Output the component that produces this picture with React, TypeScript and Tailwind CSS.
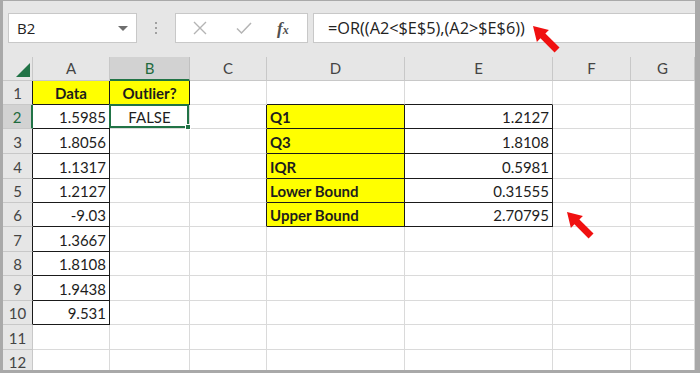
import React from 'react'

const COLS = ['A', 'B', 'C', 'D', 'E', 'F', 'G']

const dataA = ['Data', '1.5985', '1.8056', '1.1317', '1.2127', '-9.03', '1.3667', '1.8108', '1.9438', '9.531']
const labelsD = ['Q1', 'Q3', 'IQR', 'Lower Bound', 'Upper Bound']
const valuesE = ['1.2127', '1.8108', '0.5981', '0.31555', '2.70795']

function Arrow() {
  return (
    <svg width="32" height="32" viewBox="0 0 32 32">
      <g transform="translate(2,2) rotate(225) translate(-34,0)">
        <polygon points="0,-3.5 20,-3.5 20,-8.5 34,0 20,8.5 20,3.5 0,3.5" fill="#f01010" />
      </g>
    </svg>
  )
}

function Cell({ row, col }: { row: number; col: number }) {
  // col 0..6 = A..G, row 1..12
  const isA = col === 0 && row <= 10
  const isB1 = col === 1 && row === 1
  const isD = col === 3 && row >= 2 && row <= 6
  const isE = col === 4 && row >= 2 && row <= 6
  const boxed = isA || isB1 || isD || isE
  const leftOfBox = col === 2 && row >= 2 && row <= 6
  const aboveBox = (col === 3 || col === 4) && row === 1

  let cls = 'relative flex items-end pb-[1px] text-[15px] leading-[20px] text-[#1d1d1d] border-r border-b '
  cls += boxed ? 'border-[#1a1a1a] ' : leftOfBox ? 'border-r-[#1a1a1a] border-b-[#dadada] ' : aboveBox ? 'border-r-[#dadada] border-b-[#1a1a1a] ' : 'border-[#dadada] '

  let text = ''
  if (isA) {
    text = dataA[row - 1]
    cls += row === 1 ? 'bg-[#ffff00] justify-center font-bold ' : 'justify-end pr-[3px] '
  } else if (isB1) {
    text = 'Outlier?'
    cls += 'bg-[#ffff00] justify-center font-bold '
  } else if (isD) {
    text = labelsD[row - 2]
    cls += 'bg-[#ffff00] font-bold pl-[3px] '
  } else if (isE) {
    text = valuesE[row - 2]
    cls += 'justify-end pr-[3px] '
  } else if (col === 1 && row === 2) {
    text = 'FALSE'
    cls += 'justify-center '
  }

  return (
    <div className={cls}>
      {text}
      {col === 1 && row === 2 && (
        <div className="absolute -left-[1px] -top-[1px] right-0 bottom-0 border-2 border-[#217346] z-10">
          <div className="absolute -right-[4px] -bottom-[4px] w-[6px] h-[6px] bg-[#217346] border border-white" />
        </div>
      )}
    </div>
  )
}

export default function App() {
  const rows = Array.from({ length: 12 }, (_, i) => i + 1)

  return (
    <div className="relative w-[700px] h-[373px] overflow-hidden bg-white border-t border-l-[3px] border-r-[5px] border-b-[3px] border-[#a9a9a9] font-['Lato',sans-serif]">
      {/* Formula bar */}
      <div className="h-[56px] bg-[#e6e6e6] flex items-start pt-[12px] pl-[5px]">
        <div className="w-[129px] h-[30px] bg-white border border-[#c8c8c8] flex items-center justify-between pl-[8px] pr-[8px]">
          <span className="font-['Open_Sans',sans-serif] text-[15px] text-[#222]">B2</span>
          <span className="w-0 h-0 border-l-[5px] border-r-[5px] border-t-[5px] border-l-transparent border-r-transparent border-t-[#6e6e6e]" />
        </div>
        <div className="w-[38px] h-[30px] flex flex-col items-center justify-center gap-[3px]">
          <span className="w-[2px] h-[2px] bg-[#a0a0a0]" />
          <span className="w-[2px] h-[2px] bg-[#a0a0a0]" />
          <span className="w-[2px] h-[2px] bg-[#a0a0a0]" />
        </div>
        <div className="w-[133px] h-[30px] bg-white border border-[#c8c8c8] flex items-center">
          <svg width="14" height="14" viewBox="0 0 14 14" className="ml-[17px]">
            <path d="M1 1 L13 13 M13 1 L1 13" stroke="#b4b4b4" strokeWidth="1.4" />
          </svg>
          <svg width="16" height="14" viewBox="0 0 16 14" className="ml-[29px]">
            <path d="M1 7.5 L5.5 12 L15 2" stroke="#b4b4b4" strokeWidth="1.5" fill="none" />
          </svg>
          <span className="ml-[25px] font-['Liberation_Serif',serif] italic font-bold text-[17px] text-[#505050] leading-none">
            f<span className="text-[12px]">x</span>
          </span>
        </div>
        <div className="ml-[5px] flex-1 h-[30px] bg-white border border-[#c8c8c8] border-r-0 flex items-center pl-[14px]">
          <span className="font-['Open_Sans',sans-serif] text-[16.3px] text-[#222]">=OR((A2&lt;$E$5),(A2&gt;$E$6))</span>
        </div>
      </div>

      {/* Sheet grid */}
      <div className="grid grid-cols-[30px_77px_80px_77px_138px_148px_78px_1fr] grid-rows-[24px_24px_24px_25px_25px_24px_24px_25px_24px_25px_24px_25px_24px]">
        <div className="bg-[#e6e6e6] border-r border-b border-[#c8c8c8] flex items-end justify-end pr-[2px] pb-[3px]">
          <span className="w-0 h-0 border-b-[14px] border-l-[14px] border-b-[#217346] border-l-transparent" />
        </div>
        {COLS.map((c, i) => (
          <div
            key={c}
            className={
              i === 1
                ? 'bg-[#d2d2d2] border-r border-[#c0c0c0] border-b-2 border-b-[#217346] flex items-center justify-center text-[15px] text-[#1f6b3e]'
                : 'bg-[#e6e6e6] border-r border-b border-[#c8c8c8] flex items-center justify-center text-[15px] text-[#444]'
            }
          >
            {c}
          </div>
        ))}
        {rows.map((r) => (
          <React.Fragment key={r}>
            <div
              className={
                r === 2
                  ? 'bg-[#d2d2d2] border-b border-[#c8c8c8] border-r-2 border-r-[#217346] flex items-center justify-center pt-[2px] text-[15px] text-[#1f6b3e]'
                  : r <= 10
                  ? 'bg-[#e6e6e6] border-b border-[#c8c8c8] border-r border-r-[#1a1a1a] flex items-center justify-center pt-[2px] text-[15px] text-[#444]'
                  : 'bg-[#e6e6e6] border-b border-r border-[#c8c8c8] flex items-center justify-center pt-[2px] text-[15px] text-[#444]'
              }
            >
              {r}
            </div>
            {COLS.map((c, ci) => (
              <Cell key={c} row={r} col={ci} />
            ))}
          </React.Fragment>
        ))}
      </div>

      {/* Callout arrows */}
      <div className="absolute left-[528px] top-[23px]">
        <Arrow />
      </div>
      <div className="absolute left-[562px] top-[209px]">
        <Arrow />
      </div>
    </div>
  )
}
